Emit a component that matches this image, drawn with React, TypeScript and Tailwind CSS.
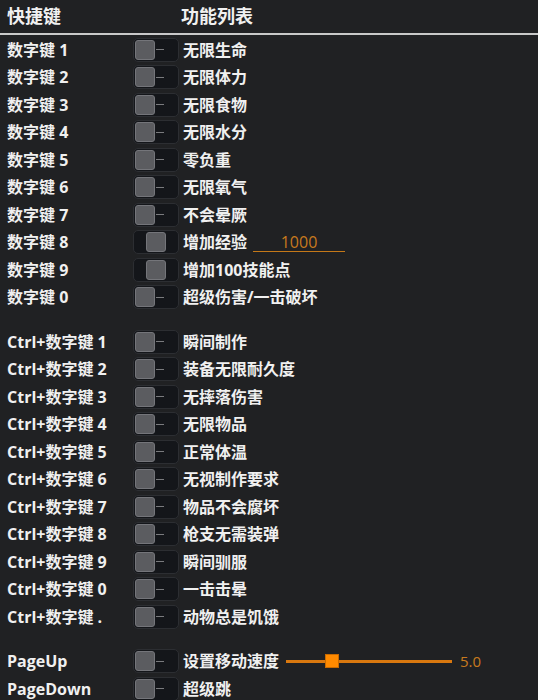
import React from "react";

type Row = {
    keyName: string;
    label: string;
    mid?: boolean;
    extra?: "input" | "slider";
};

const digitRows: Row[] = [
    { keyName: "数字键 1", label: "无限生命" },
    { keyName: "数字键 2", label: "无限体力" },
    { keyName: "数字键 3", label: "无限食物" },
    { keyName: "数字键 4", label: "无限水分" },
    { keyName: "数字键 5", label: "零负重" },
    { keyName: "数字键 6", label: "无限氧气" },
    { keyName: "数字键 7", label: "不会晕厥" },
    { keyName: "数字键 8", label: "增加经验", mid: true, extra: "input" },
    { keyName: "数字键 9", label: "增加100技能点", mid: true },
    { keyName: "数字键 0", label: "超级伤害/一击破坏" },
];

const ctrlRows: Row[] = [
    { keyName: "Ctrl+数字键 1", label: "瞬间制作" },
    { keyName: "Ctrl+数字键 2", label: "装备无限耐久度" },
    { keyName: "Ctrl+数字键 3", label: "无摔落伤害" },
    { keyName: "Ctrl+数字键 4", label: "无限物品" },
    { keyName: "Ctrl+数字键 5", label: "正常体温" },
    { keyName: "Ctrl+数字键 6", label: "无视制作要求" },
    { keyName: "Ctrl+数字键 7", label: "物品不会腐坏" },
    { keyName: "Ctrl+数字键 8", label: "枪支无需装弹" },
    { keyName: "Ctrl+数字键 9", label: "瞬间驯服" },
    { keyName: "Ctrl+数字键 0", label: "一击击晕" },
    { keyName: "Ctrl+数字键 .", label: "动物总是饥饿" },
];

const pageRows: Row[] = [
    { keyName: "PageUp", label: "设置移动速度", extra: "slider" },
    { keyName: "PageDown", label: "超级跳" },
];

function Toggle({ mid }: { mid?: boolean }) {
    return (
        <div className="w-[46px] h-[24px] rounded-[5px] bg-[#14161a] border border-[#2c2e32] flex items-center pl-[1px] shrink-0">
            {mid ? (
                <div className="ml-[11px] w-[20px] h-[20px] rounded-[3px] bg-[#5b5c60] border border-[#74757a]" />
            ) : (
                <>
                    <div className="w-[20px] h-[20px] rounded-[3px] bg-[#5b5c60] border border-[#74757a]" />
                    <div className="ml-[1px] w-[8px] h-[1px] bg-[#7a7b7e]" />
                </>
            )}
        </div>
    );
}

function Line({ row }: { row: Row }) {
    return (
        <div className="h-[27.5px] flex items-center">
            <div className="w-[133px] pl-[7px] text-[16px] shrink-0">{row.keyName}</div>
            <Toggle mid={row.mid} />
            <div className="ml-[4px] text-[16px]">{row.label}</div>
            {row.extra === "input" && (
                <div className="ml-[6px] w-[92px] border-b border-[#c47818] text-center text-[16px] font-normal text-[#c87a1e] leading-[18px]">
                    1000
                </div>
            )}
            {row.extra === "slider" && (
                <div className="flex items-center">
                    <div className="ml-[7px] w-[166px] h-[3px] bg-[#d9780f] relative">
                        <div className="absolute left-[39px] top-[-6px] w-[14px] h-[14px] bg-[#ff8a00] border border-[#c86a00]" />
                    </div>
                    <span className="ml-[8px] text-[15px] font-normal text-[#c87a1e]">5.0</span>
                </div>
            )}
        </div>
    );
}

export default function App() {
    return (
        <div
            className="w-[538px] h-[700px] bg-[#202123] text-[#f0f0f0] font-bold overflow-hidden"
            style={{ fontFamily: '"Open Sans", "Noto Sans CJK SC", sans-serif' }}
        >
            <div className="h-[33px] flex items-center text-[18px]">
                <div className="w-[181px] pl-[7px]">快捷键</div>
                <div>功能列表</div>
            </div>
            <div className="h-[2px] bg-[#c9c9c9]" />
            <div className="pt-[1px]">
                {digitRows.map((r) => (
                    <Line key={r.keyName} row={r} />
                ))}
            </div>
            <div className="mt-[17px]">
                {ctrlRows.map((r) => (
                    <Line key={r.keyName} row={r} />
                ))}
            </div>
            <div className="mt-[17px]">
                {pageRows.map((r) => (
                    <Line key={r.keyName} row={r} />
                ))}
            </div>
        </div>
    );
}
